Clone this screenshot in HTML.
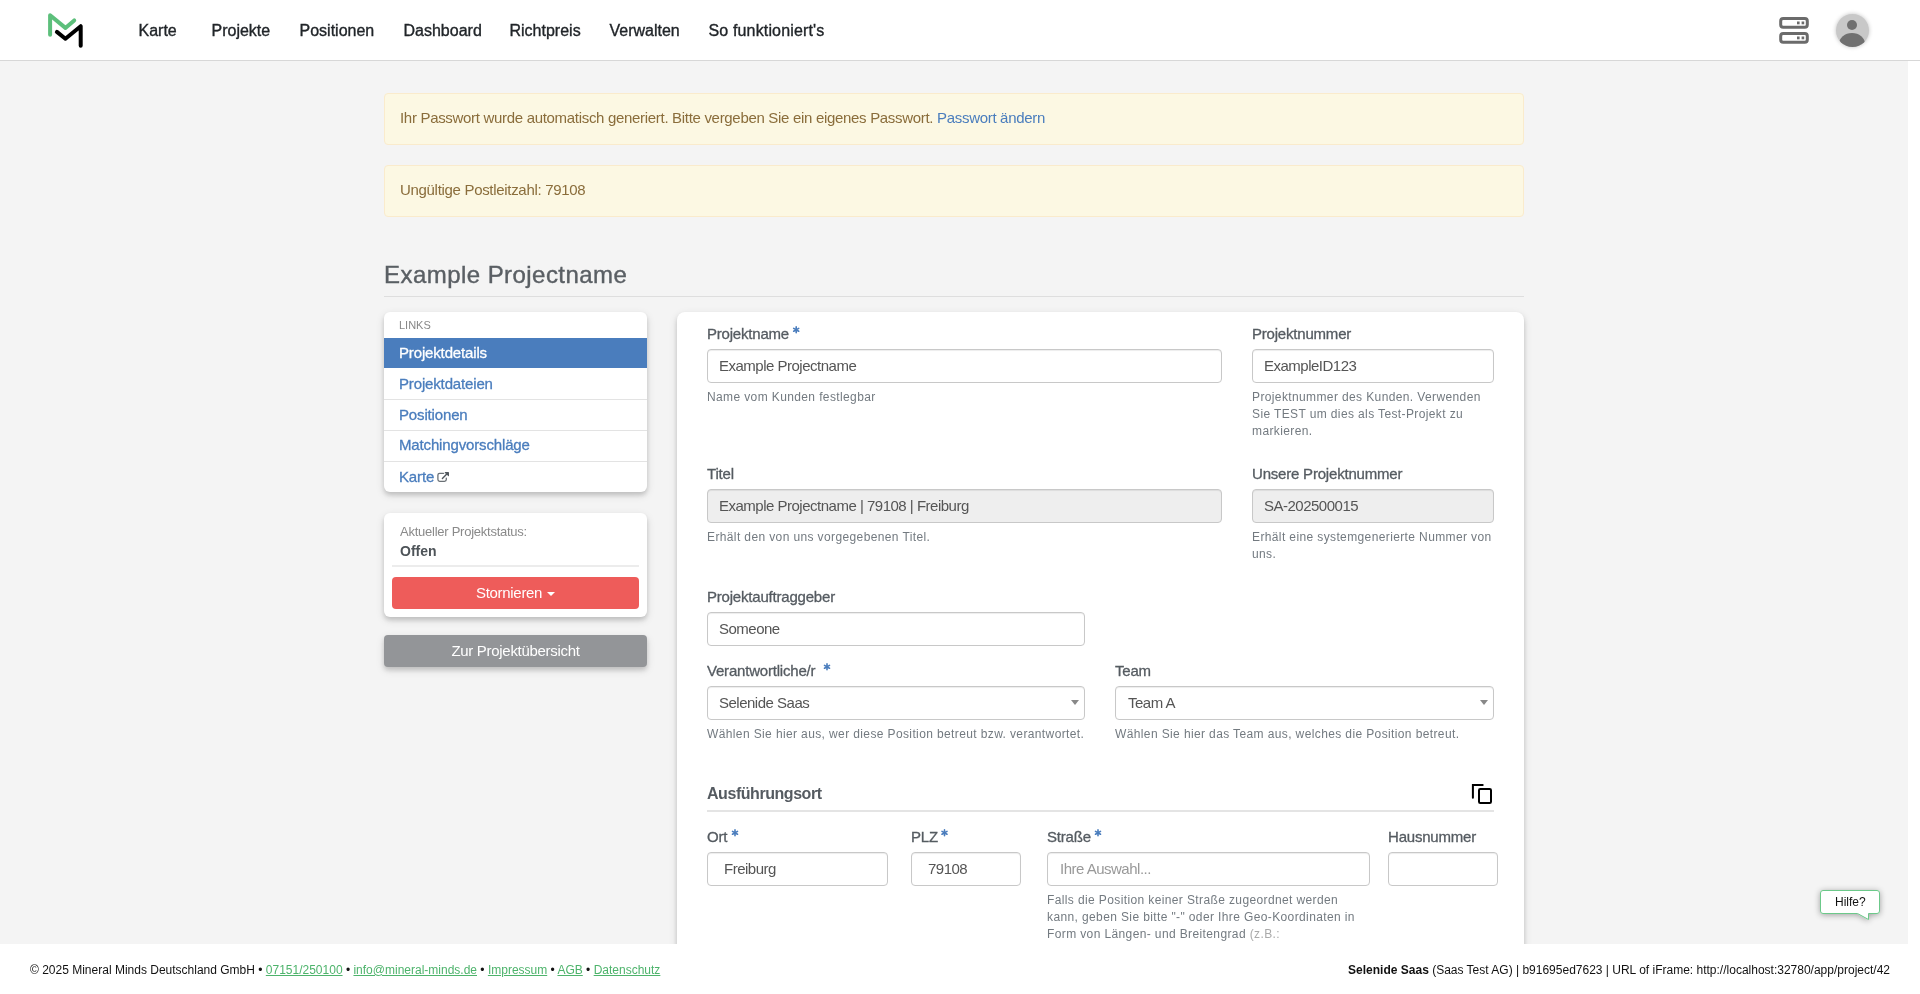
<!DOCTYPE html>
<html><head><meta charset="utf-8">
<style>
*{box-sizing:border-box;margin:0;padding:0}
html,body{width:1920px;height:994px;overflow:hidden;background:#fff;font-family:"Liberation Sans",sans-serif}
.a{position:absolute;white-space:nowrap;line-height:20px}
#hdr{position:absolute;left:0;top:0;width:1920px;height:61px;background:#fff;border-bottom:1px solid #d7d7d7}
.nav{font-size:16px;color:#212529;top:21px;-webkit-text-stroke:0.35px #212529}
#bg{position:absolute;left:0;top:61px;width:1908px;height:883px;background:#f4f4f4;overflow:hidden}
.alert{position:absolute;left:384px;width:1140px;height:52px;background:#fcf8e3;border:1px solid #faebcc;border-radius:4px}
.alt{font-size:15px;color:#8a6d3b;letter-spacing:-0.31px}
.panel{position:absolute;background:#fff;box-shadow:0 3px 4px rgba(0,0,0,.13),0 3px 9px rgba(0,0,0,.13)}
.lbl{font-size:15px;color:#555b61;-webkit-text-stroke:0.3px #555b61;letter-spacing:-0.2px}
.ast{color:#4a7dbd;font-size:12px;-webkit-text-stroke:0.4px #4a7dbd;position:relative;top:-4px;margin-left:4px}
.inp{position:absolute;height:34px;border:1px solid #c8c8c8;border-radius:4px;background:#fff;box-shadow:inset 0 1px 1px rgba(0,0,0,.075)}
.inp.dis{background:#eee}
.it{font-size:15px;color:#555;letter-spacing:-0.5px}
.help{font-size:12px;color:#737a80;letter-spacing:0.38px;line-height:17px}
.side{font-size:15px;color:#4a7dbd;-webkit-text-stroke:0.3px #4a7dbd;letter-spacing:-0.15px}
.sep{position:absolute;height:1px;background:#e3e3e3}
.ft{font-size:12px;color:#111}
.ft a{color:#4db36b;text-decoration:underline}
</style></head><body><div style="will-change:transform;position:absolute;left:0;top:0;width:1920px;height:994px">
<div id="hdr">
  <svg style="position:absolute;left:40px;top:5px" width="50" height="50" viewBox="40 5 50 50">
    <polyline points="50.1,34.7 50.1,15.2 65.4,27.9 74.2,20.4" fill="none" stroke="#5cbf7b" stroke-width="4" stroke-linecap="round" stroke-linejoin="round"/>
    <polyline points="56.9,31.9 65.4,38.7 80.7,26.2 80.7,45.7" fill="none" stroke="#000" stroke-width="4" stroke-linecap="round" stroke-linejoin="round"/>
  </svg>
  <div class="a nav" style="left:138.5px">Karte</div>
  <div class="a nav" style="left:211.5px">Projekte</div>
  <div class="a nav" style="left:299.5px">Positionen</div>
  <div class="a nav" style="left:403.5px">Dashboard</div>
  <div class="a nav" style="left:509.5px">Richtpreis</div>
  <div class="a nav" style="left:609.5px">Verwalten</div>
  <div class="a nav" style="left:708.5px;letter-spacing:0.15px">So funktioniert's</div>
  <svg style="position:absolute;left:1770px;top:10px" width="50" height="40" viewBox="1770 10 50 40">
    <rect x="1780.7" y="18.5" width="26.6" height="8.7" rx="2.5" fill="none" stroke="#6b6b6b" stroke-width="3"/>
    <rect x="1780.7" y="33.5" width="26.6" height="8.7" rx="2.5" fill="none" stroke="#6b6b6b" stroke-width="3"/>
    <rect x="1797" y="21.5" width="2.6" height="2.8" fill="#6b6b6b"/><rect x="1801.6" y="21.5" width="2.6" height="2.8" fill="#6b6b6b"/>
    <rect x="1797" y="36.5" width="2.6" height="2.8" fill="#6b6b6b"/><rect x="1801.6" y="36.5" width="2.6" height="2.8" fill="#6b6b6b"/>
  </svg>
  <div style="position:absolute;left:1835.5px;top:13.5px;width:33px;height:33px;border-radius:50%;background:#c8c8c8;overflow:hidden;box-shadow:0 0 4px rgba(0,0,0,.25)">
    <div style="position:absolute;left:11.3px;top:6.3px;width:10.4px;height:10.4px;border-radius:50%;background:#707070"></div>
    <div style="position:absolute;left:3.2px;top:19.3px;width:26.6px;height:22px;border-radius:50%;background:#707070"></div>
  </div>
</div>

<div id="bg">
  <div style="position:absolute;left:0;top:-61px;width:1908px;height:1005px">
  <div class="alert" style="top:93px"></div>
  <div class="a alt" style="left:400px;top:108px">Ihr Passwort wurde automatisch generiert. Bitte vergeben Sie ein eigenes Passwort. <span style="color:#4a7dbd">Passwort ändern</span></div>
  <div class="alert" style="top:165px"></div>
  <div class="a alt" style="left:400px;top:180px">Ungültige Postleitzahl: 79108</div>

  <div class="a" style="left:384px;top:264.7px;font-size:24px;color:#5a5f64;-webkit-text-stroke:0.4px #5a5f64;letter-spacing:0.45px">Example Projectname</div>
  <div style="position:absolute;left:384px;top:296px;width:1140px;height:1px;background:#dedede"></div>

  <!-- sidebar links -->
  <div class="panel" style="left:384px;top:312px;width:263px;height:180px;border-radius:6px;overflow:hidden">
    <div style="position:absolute;left:0;top:26px;width:263px;height:30px;background:#4a7dbd"></div>
    <div class="sep" style="left:0;top:87px;width:263px"></div>
    <div class="sep" style="left:0;top:118px;width:263px"></div>
    <div class="sep" style="left:0;top:149px;width:263px"></div>
  </div>
  <div class="a" style="left:399px;top:314.9px;font-size:11px;color:#888">LINKS</div>
  <div class="a side" style="left:399px;top:342.5px;color:#fff;-webkit-text-stroke:0.3px #fff">Projektdetails</div>
  <div class="a side" style="left:399px;top:373.7px">Projektdateien</div>
  <div class="a side" style="left:399px;top:404.7px">Positionen</div>
  <div class="a side" style="left:399px;top:435.4px">Matchingvorschläge</div>
  <div class="a side" style="left:399px;top:467px">Karte</div>
  <svg style="position:absolute;left:430px;top:465px" width="25" height="25" viewBox="430 465 25 25">
    <path d="M443.6 473.3H439.7Q437.9 473.3 437.9 475.1V479.5Q437.9 481.3 439.7 481.3H444.5Q446.3 481.3 446.3 479.5V478.1" fill="none" stroke="#6a7075" stroke-width="1.3" stroke-linecap="round"/>
    <path d="M442.4 478.5L447.8 473.1M445.4 472.7H448.3V475.6" fill="none" stroke="#50565c" stroke-width="1.4" stroke-linecap="round" stroke-linejoin="round"/>
  </svg>

  <!-- status -->
  <div class="panel" style="left:384px;top:513px;width:263px;height:104px;border-radius:6px"></div>
  <div class="a" style="left:400px;top:521.7px;font-size:13px;color:#8a8a8a;letter-spacing:-0.25px">Aktueller Projektstatus:</div>
  <div class="a" style="left:400px;top:541.2px;font-size:14px;font-weight:bold;color:#4d5358">Offen</div>
  <div style="position:absolute;left:392px;top:565px;width:247px;height:2px;background:#ececec"></div>
  <div style="position:absolute;left:392px;top:577px;width:247px;height:32px;background:#ee5c5a;border-radius:4px"></div>
  <div class="a" style="left:392px;top:582.8px;width:247px;text-align:center;font-size:15px;color:#fff;letter-spacing:-0.3px">Stornieren <span style="display:inline-block;width:0;height:0;border-left:4px solid transparent;border-right:4px solid transparent;border-top:4px solid #fff;vertical-align:middle;margin-left:1px"></span></div>
  <div style="position:absolute;left:384px;top:635px;width:263px;height:32px;background:#939598;border-radius:4px;box-shadow:0 3px 4px rgba(0,0,0,.13),0 3px 9px rgba(0,0,0,.13)"></div>
  <div class="a" style="left:384px;top:640.8px;width:263px;text-align:center;font-size:15px;color:#fff;letter-spacing:-0.3px">Zur Projektübersicht</div>

  <!-- main panel -->
  <div class="panel" style="left:677px;top:312px;width:847px;height:700px;border-radius:8px"></div>

  <div class="a lbl" style="left:707px;top:323.6px">Projektname</div>
  <div class="inp" style="left:707px;top:349px;width:515px"></div>
  <div class="a it" style="left:719px;top:355.8px">Example Projectname</div>
  <div class="a help" style="left:707px;top:389.3px">Name vom Kunden festlegbar</div>

  <div class="a lbl" style="left:1252px;top:323.6px">Projektnummer</div>
  <div class="inp" style="left:1252px;top:349px;width:242px"></div>
  <div class="a it" style="left:1264px;top:355.8px">ExampleID123</div>
  <div class="a help" style="left:1252px;top:389.3px;white-space:normal;width:250px">Projektnummer des Kunden. Verwenden<br>Sie TEST um dies als Test-Projekt zu<br>markieren.</div>

  <div class="a lbl" style="left:707px;top:463.8px">Titel</div>
  <div class="inp dis" style="left:707px;top:489px;width:515px"></div>
  <div class="a it" style="left:719px;top:495.8px">Example Projectname | 79108 | Freiburg</div>
  <div class="a help" style="left:707px;top:529.3px">Erhält den von uns vorgegebenen Titel.</div>

  <div class="a lbl" style="left:1252px;top:463.8px">Unsere Projektnummer</div>
  <div class="inp dis" style="left:1252px;top:489px;width:242px"></div>
  <div class="a it" style="left:1264px;top:495.8px">SA-202500015</div>
  <div class="a help" style="left:1252px;top:529.3px">Erhält eine systemgenerierte Nummer von<br>uns.</div>

  <div class="a lbl" style="left:707px;top:586.8px">Projektauftraggeber</div>
  <div class="inp" style="left:707px;top:612px;width:378px"></div>
  <div class="a it" style="left:719px;top:618.8px">Someone</div>

  <div class="a lbl" style="left:707px;top:660.8px">Verantwortliche/r</div>
  <div class="inp" style="left:707px;top:686px;width:378px"></div>
  <div class="a it" style="left:719px;top:692.8px">Selenide Saas</div>
  <div style="position:absolute;left:1071px;top:700px;width:0;height:0;border-left:4.5px solid transparent;border-right:4.5px solid transparent;border-top:5px solid #888"></div>
  <div class="a help" style="left:707px;top:726.3px">Wählen Sie hier aus, wer diese Position betreut bzw. verantwortet.</div>

  <div class="a lbl" style="left:1115px;top:660.8px">Team</div>
  <div class="inp" style="left:1115px;top:686px;width:379px"></div>
  <div class="a it" style="left:1128px;top:692.8px">Team A</div>
  <div style="position:absolute;left:1480px;top:700px;width:0;height:0;border-left:4.5px solid transparent;border-right:4.5px solid transparent;border-top:5px solid #888"></div>
  <div class="a help" style="left:1115px;top:726.3px">Wählen Sie hier das Team aus, welches die Position betreut.</div>

  <div class="a" style="left:707px;top:783.5px;font-size:16px;font-weight:bold;color:#555b61;letter-spacing:-0.45px">Ausführungsort</div>
  <svg style="position:absolute;left:1466px;top:778px" width="32" height="32" viewBox="1466 778 32 32">
    <path d="M1472.9 797.7V784.9H1482.7" fill="none" stroke="#000" stroke-width="2" stroke-linecap="round" stroke-linejoin="miter"/>
    <rect x="1479" y="789" width="12" height="14" rx="1.3" fill="none" stroke="#000" stroke-width="2"/>
  </svg>
  <div style="position:absolute;left:707px;top:810px;width:787px;height:2px;background:#e4e4e4"></div>

  <div class="a lbl" style="left:707px;top:826.8px">Ort</div>
  <div class="inp" style="left:707px;top:852px;width:181px"></div>
  <div class="a it" style="left:724px;top:858.8px">Freiburg</div>
  <div class="a lbl" style="left:911px;top:826.8px">PLZ</div>
  <div class="inp" style="left:911px;top:852px;width:110px"></div>
  <div class="a it" style="left:928px;top:858.8px">79108</div>
  <div class="a lbl" style="left:1047px;top:826.8px">Straße</div>
  <div class="inp" style="left:1047px;top:852px;width:323px"></div>
  <div class="a it" style="left:1060px;top:858.8px;color:#999">Ihre Auswahl...</div>
  <div class="a lbl" style="left:1388px;top:826.8px">Hausnummer</div>
  <div class="inp" style="left:1388px;top:852px;width:110px"></div>
  <div class="a help" style="left:1047px;top:891.5px;line-height:17.4px">Falls die Position keiner Straße zugeordnet werden<br>kann, geben Sie bitte "-" oder Ihre Geo-Koordinaten in<br>Form von Längen- und Breitengrad <span style="color:#aaa">(z.B.:</span></div>

  <svg style="position:absolute;left:790px;top:323px" width="12" height="12" viewBox="790 323 12 12"><path d="M796.20 326.90L796.20 332.70M793.69 328.35L798.71 331.25M798.71 328.35L793.69 331.25" stroke="#4a7dbd" stroke-width="1.6" stroke-linecap="round"/></svg><svg style="position:absolute;left:821px;top:660px" width="12" height="12" viewBox="821 660 12 12"><path d="M827.00 663.90L827.00 669.70M824.49 665.35L829.51 668.25M829.51 665.35L824.49 668.25" stroke="#4a7dbd" stroke-width="1.6" stroke-linecap="round"/></svg><svg style="position:absolute;left:729px;top:826px" width="12" height="12" viewBox="729 826 12 12"><path d="M735.00 829.90L735.00 835.70M732.49 831.35L737.51 834.25M737.51 831.35L732.49 834.25" stroke="#4a7dbd" stroke-width="1.6" stroke-linecap="round"/></svg><svg style="position:absolute;left:938px;top:826px" width="12" height="12" viewBox="938 826 12 12"><path d="M944.50 829.90L944.50 835.70M941.99 831.35L947.01 834.25M947.01 831.35L941.99 834.25" stroke="#4a7dbd" stroke-width="1.6" stroke-linecap="round"/></svg><svg style="position:absolute;left:1092px;top:826px" width="12" height="12" viewBox="1092 826 12 12"><path d="M1098.00 829.90L1098.00 835.70M1095.49 831.35L1100.51 834.25M1100.51 831.35L1095.49 834.25" stroke="#4a7dbd" stroke-width="1.6" stroke-linecap="round"/></svg>
  <!-- help bubble -->
  <svg style="position:absolute;left:1810px;top:880px" width="80" height="50" viewBox="1810 880 80 50">
    <defs><filter id="sh" x="-50%" y="-50%" width="200%" height="200%"><feGaussianBlur in="SourceAlpha" stdDeviation="3"/><feOffset dy="1"/><feComponentTransfer><feFuncA type="linear" slope="0.35"/></feComponentTransfer><feMerge><feMergeNode/><feMergeNode in="SourceGraphic"/></feMerge></filter></defs>
    <path d="M1823 890.5H1877Q1879.5 890.5 1879.5 893V911Q1879.5 913.5 1877 913.5H1868.5V919.5L1857.5 913.5H1823Q1820.5 913.5 1820.5 911V893Q1820.5 890.5 1823 890.5Z" fill="#fff" stroke="#6cc98a" stroke-width="1" filter="url(#sh)"/>
  </svg>
  <div class="a" style="left:1835px;top:891.8px;font-size:12px;color:#111">Hilfe?</div>
  </div>
</div>

<div class="a ft" style="left:30px;top:959.8px">© 2025 Mineral Minds Deutschland GmbH • <a>07151/250100</a> • <a>info@mineral-minds.de</a> • <a>Impressum</a> • <a>AGB</a> • <a>Datenschutz</a></div>
<div class="a ft" style="right:30px;top:959.8px"><b>Selenide Saas</b> (Saas Test AG) | b91695ed7623 | URL of iFrame: http://localhost:32780/app/project/42</div>
</div></body></html>
